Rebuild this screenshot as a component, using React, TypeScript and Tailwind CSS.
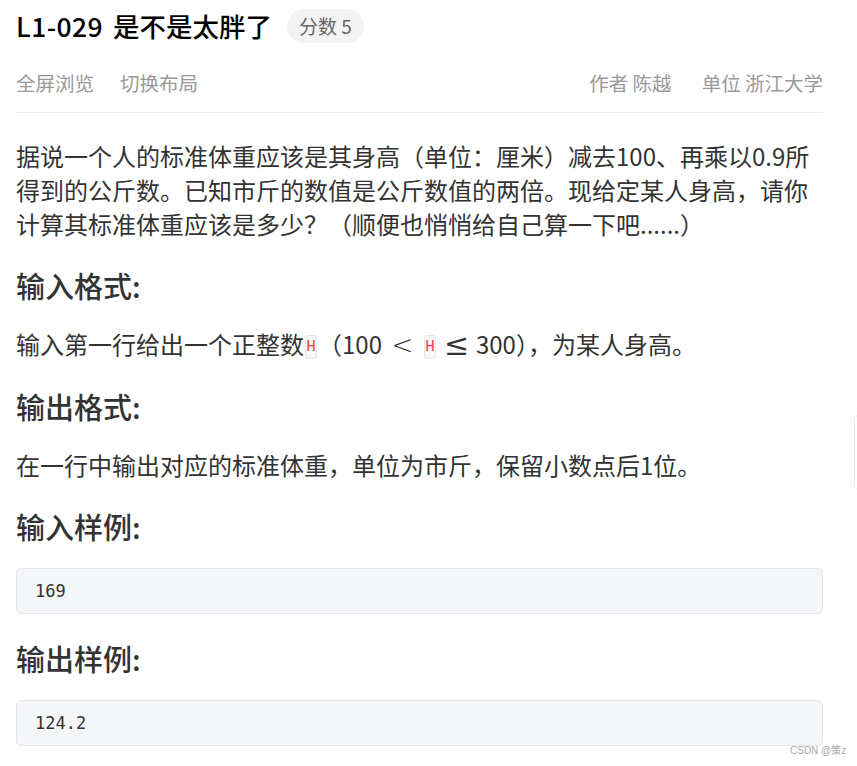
function InlineCode({ children }: { children: string }) {
  return (
    <code className="mx-[1px] inline-block h-[24px] w-[12px] rounded-[3px] border border-[#e5e6eb] bg-[#f7f8fa] text-center align-middle font-['Liberation_Mono',monospace] text-[16px] leading-[22px] text-[#f53f3f]">
      {children}
    </code>
  );
}

function SectionTitle({ children }: { children: string }) {
  return (
    <h2 className="mt-6 mb-[22px] text-[29px] leading-[40px] font-medium text-[#333]">
      {children}
    </h2>
  );
}

function SampleBlock({ children }: { children: string }) {
  return (
    <pre className="flex h-[46px] items-center rounded-[5px] border border-[#e5e6eb] bg-[#f5f6f8] px-[18px] font-['DejaVu_Sans_Mono',monospace] text-[17px] text-[#333]">
      {children}
    </pre>
  );
}

export default function App() {
  return (
    <div className="relative h-[766px] w-[857px] overflow-hidden bg-white font-['Noto_Sans_CJK_SC','Noto_Sans',sans-serif]">
      <div className="ml-4 w-[807px] pt-[9px]">
        {/* Header */}
        <div className="flex h-[34px] items-center gap-[15px]">
          <h1 className="flex items-center gap-[10px] text-[26.5px] leading-[34px] font-medium text-black">
            <span className="tracking-[0.4px]">L1-029</span>
            <span>是不是太胖了</span>
          </h1>
          <span className="flex h-[34px] items-center rounded-full bg-[#f2f3f5] px-3 text-[19px] text-[#666]">
            分数 5
          </span>
        </div>

        <div className="mt-[26px] flex h-[28px] items-center justify-between text-[19.5px] leading-[28px] text-[#999]">
          <div className="flex gap-[26px]">
            <span>全屏浏览</span>
            <span>切换布局</span>
          </div>
          <div className="flex gap-[30px]">
            <span>作者 陈越</span>
            <span>单位 浙江大学</span>
          </div>
        </div>

        <div className="mt-[15px] h-px bg-[#eeeeee]" />

        {/* Problem body */}
        <div className="mt-[26px] text-[24px] leading-[34px] text-[#333]">
          <p>
            据说一个人的标准体重应该是其身高（单位：厘米）减去100、再乘以0.9所得到的公斤数。已知市斤的数值是公斤数值的两倍。现给定某人身高，请你计算其标准体重应该是多少？（顺便也悄悄给自己算一下吧......）
          </p>

          <SectionTitle>输入格式:</SectionTitle>
          <p>
            输入第一行给出一个正整数<InlineCode>H</InlineCode>（100
            <span className="inline-block w-[41px] text-center font-['DejaVu_Sans',sans-serif] text-[26px] font-extralight">
              &lt;
            </span>
            <InlineCode>H</InlineCode>
            <span className="inline-block w-[39px] text-center align-[-1px] font-['DejaVu_Serif',serif] text-[30px] leading-[24px] font-extralight">
              ≤
            </span>
            300），为某人身高。
          </p>

          <SectionTitle>输出格式:</SectionTitle>
          <p>在一行中输出对应的标准体重，单位为市斤，保留小数点后1位。</p>

          <SectionTitle>输入样例:</SectionTitle>
          <SampleBlock>169</SampleBlock>

          <SectionTitle>输出样例:</SectionTitle>
          <SampleBlock>124.2</SampleBlock>
        </div>
      </div>

      {/* floating side tab at the right edge */}
      <div className="absolute top-[415px] left-[854px] h-[75px] w-[12px] rounded-l-[4px] border border-[#ebebeb] bg-white" />

      {/* watermark */}
      <div className="absolute top-[745px] left-[790px] font-['Liberation_Sans','Noto_Sans_CJK_SC',sans-serif] text-[10px] leading-[12px] text-[#aaa]">
        CSDN @策z
      </div>
    </div>
  );
}
